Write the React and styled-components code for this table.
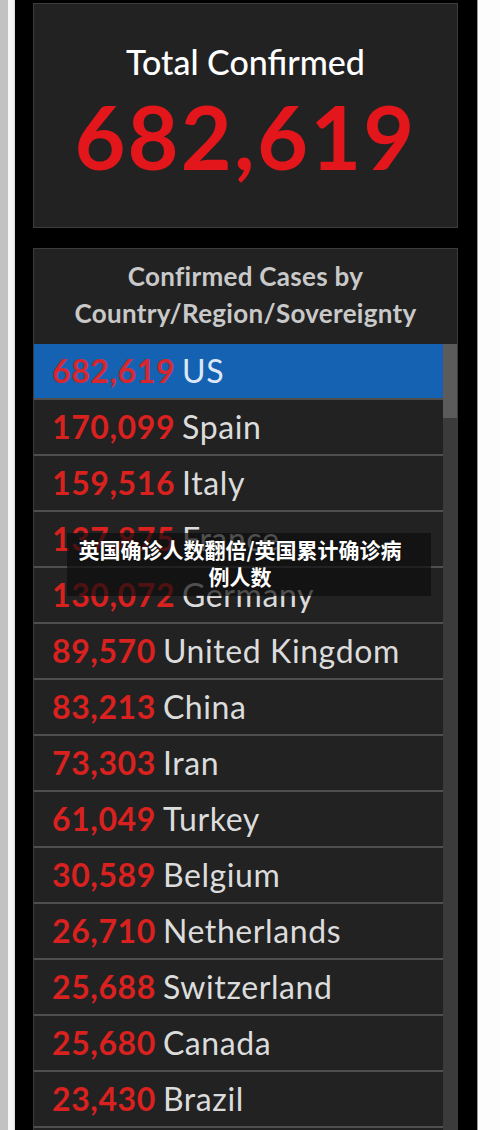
import React from "react"
import styled, { createGlobalStyle } from "styled-components"

const GlobalStyle = createGlobalStyle`
  html, body {
    margin: 0;
    padding: 0;
    background: #fdfdfd;
  }
  body {
    font-family: Lato, "Noto Sans", "Liberation Sans", sans-serif;
  }
`

const Page = styled.div`
  position: relative;
  display: flex;
  width: 500px;
  height: 1130px;
  overflow: hidden;
`

const GrayGutter = styled.div`
  width: 8px;
  flex: none;
  background: #c2c2c2;
`

const LightStrip = styled.div`
  width: 7px;
  flex: none;
  background: linear-gradient(to right, #f6f6f6 0, #f6f6f6 5px, #d8d8d8 7px);
`

const Frame = styled.div`
  width: 462px;
  flex: none;
  background: #000;
  padding: 3px 19px 0 18px;
  box-sizing: border-box;
  display: flex;
  flex-direction: column;
  gap: 20px;
`

const EdgeLine = styled.div`
  width: 1px;
  flex: none;
  background: #9a9a9a;
`

const Panel = styled.section`
  background: #222;
  border: 1px solid #3c3c3c;
  box-sizing: border-box;
`

const TotalPanel = styled(Panel)`
  flex: none;
  height: 225px;
  display: flex;
  flex-direction: column;
  align-items: center;
  padding-top: 34px;
`

const TotalTitle = styled.div`
  color: #fff;
  font-size: 34px;
  font-weight: 500;
  line-height: 48px;
`

const TotalNumber = styled.div`
  color: #e3161b;
  font-size: 88px;
  font-weight: 700;
  line-height: 100px;
  letter-spacing: 2.2px;
`

const ListPanel = styled(Panel)`
  flex: 1;
  min-height: 0;
  overflow: hidden;
  display: flex;
  flex-direction: column;
  border-bottom: none;
`

const ListHeader = styled.h2`
  margin: 0;
  height: 95px;
  flex: none;
  box-sizing: border-box;
  padding-top: 9px;
  text-align: center;
  color: #c9c9c9;
  font-size: 26px;
  font-weight: 700;
  line-height: 37px;
  letter-spacing: 0.3px;
`

const ListBody = styled.div`
  flex: 1;
  display: flex;
`

const Rows = styled.ul`
  list-style: none;
  margin: 0;
  padding: 0;
  flex: 1;
`

const Row = styled.li`
  height: 56px;
  box-sizing: border-box;
  display: flex;
  align-items: center;
  gap: 7px;
  padding-left: 18px;
  border-bottom: 2px solid #4f4f4f;
  background: ${(p) => (p.$selected ? "#1662b2" : "#222")};
  font-size: 32px;
  line-height: 1;
  letter-spacing: 0.6px;
`

const Count = styled.span`
  color: ${(p) => (p.$selected ? "#d8262e" : "#d9211f")};
  font-weight: 700;
`

const Country = styled.span`
  color: ${(p) => (p.$selected ? "#dde8f6" : "#dcdcdc")};
  font-weight: 400;
`

const ScrollTrack = styled.div`
  width: 14px;
  flex: none;
  background: #3b3b3b;
`

const ScrollThumb = styled.div`
  height: 74px;
  background: #5b5b5b;
`

const Caption = styled.div`
  position: absolute;
  left: 67px;
  top: 533px;
  width: 364px;
  box-sizing: border-box;
  padding: 3px 18px 6px 0;
  background: rgba(12, 12, 12, 0.68);
  color: #fff;
  font-family: "Noto Sans CJK SC", "Noto Sans", sans-serif;
  font-size: 21px;
  font-weight: 700;
  line-height: 27px;
  text-align: center;
  white-space: nowrap;
  text-shadow: 0 0 2px rgba(0, 0, 0, 0.6);
`

const cases = [
  ["682,619", "US"],
  ["170,099", "Spain"],
  ["159,516", "Italy"],
  ["137,875", "France"],
  ["130,072", "Germany"],
  ["89,570", "United Kingdom"],
  ["83,213", "China"],
  ["73,303", "Iran"],
  ["61,049", "Turkey"],
  ["30,589", "Belgium"],
  ["26,710", "Netherlands"],
  ["25,688", "Switzerland"],
  ["25,680", "Canada"],
  ["23,430", "Brazil"],
]

export default function App() {
  return (
    <>
      <GlobalStyle />
      <Page>
        <GrayGutter />
        <LightStrip />
        <Frame>
          <TotalPanel>
            <TotalTitle>Total Confirmed</TotalTitle>
            <TotalNumber>682,619</TotalNumber>
          </TotalPanel>
          <ListPanel>
            <ListHeader>
              Confirmed Cases by
              <br />
              Country/Region/Sovereignty
            </ListHeader>
            <ListBody>
              <Rows>
                {cases.map(([count, name], i) => (
                  <Row key={i} $selected={i === 0}>
                    <Count $selected={i === 0}>{count}</Count>
                    <Country $selected={i === 0}>{name}</Country>
                  </Row>
                ))}
              </Rows>
              <ScrollTrack>
                <ScrollThumb />
              </ScrollTrack>
            </ListBody>
          </ListPanel>
        </Frame>
        <EdgeLine />
        <Caption>
          英国确诊人数翻倍/英国累计确诊病
          <br />
          例人数
        </Caption>
      </Page>
    </>
  )
}
